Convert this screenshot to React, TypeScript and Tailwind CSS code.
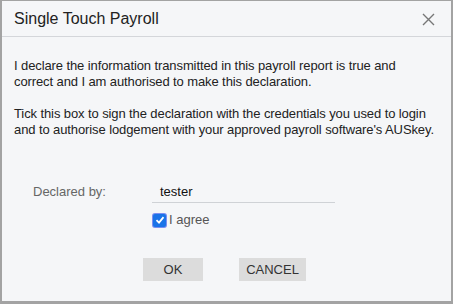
import React from "react";

export default function App() {
  return (
    <div className="w-[453px] h-[304px] bg-[#f5f6f8] border-t border-x-2 border-b-[3px] border-[#a3a3a3] flex flex-col" style={{ fontFamily: '"Liberation Sans", Arial, sans-serif' }}>
      <div className="h-[36px] shrink-0 border-b border-[#d4d6da] flex items-center justify-between pl-[12px] pr-[16px]">
        <span className="text-[16px] text-[#222]">Single Touch Payroll</span>
        <svg width="13" height="13" viewBox="0 0 13 13" className="mt-[2px]">
          <path d="M1 1 L12 12 M12 1 L1 12" stroke="#777" strokeWidth="1.4" />
        </svg>
      </div>
      <div className="flex-1 flex flex-col pt-[21px] pl-[12px] pr-[2px] text-[13px] leading-[16px] text-[#222]">
        <p className="tracking-[-0.1px]">I declare the information transmitted in this payroll report is true and<br />correct and I am authorised to make this declaration.</p>
        <p className="mt-[16px] tracking-[-0.1px] whitespace-nowrap">Tick this box to sign the declaration with the credentials you used to login<br />and to authorise lodgement with your approved payroll software's AUSkey.</p>
        <div className="mt-[45px] flex items-start">
          <div className="w-[138px] pl-[19px] text-[#666] pt-[1px]">Declared by:</div>
          <div className="flex flex-col">
            <div className="w-[183px] border-b border-[#cfd2d6] pl-[8px] pb-[2px] text-[#111] pt-[1px]">tester</div>
            <label className="flex items-center mt-[9px] text-[#555]">
              <span className="w-[13px] h-[13px] ml-[1px] rounded-[2px] bg-[#1a73e8] flex items-center justify-center shadow-[0_0_0_1px_#7b8ef0]">
                <svg width="10" height="10" viewBox="0 0 10 10">
                  <path d="M1.5 5.2 L4 7.6 L8.5 2.2" stroke="#fff" strokeWidth="1.8" fill="none" />
                </svg>
              </span>
              <span className="ml-[3px]">I agree</span>
            </label>
          </div>
        </div>
        <div className="mt-[30px] flex pl-[129px]">
          <button className="w-[60px] h-[23px] bg-[#dcdcdc] text-[#333] text-[13px]">OK</button>
          <button className="ml-[36px] w-[67px] h-[23px] bg-[#dcdcdc] text-[#333] text-[13px]">CANCEL</button>
        </div>
      </div>
    </div>
  );
}
